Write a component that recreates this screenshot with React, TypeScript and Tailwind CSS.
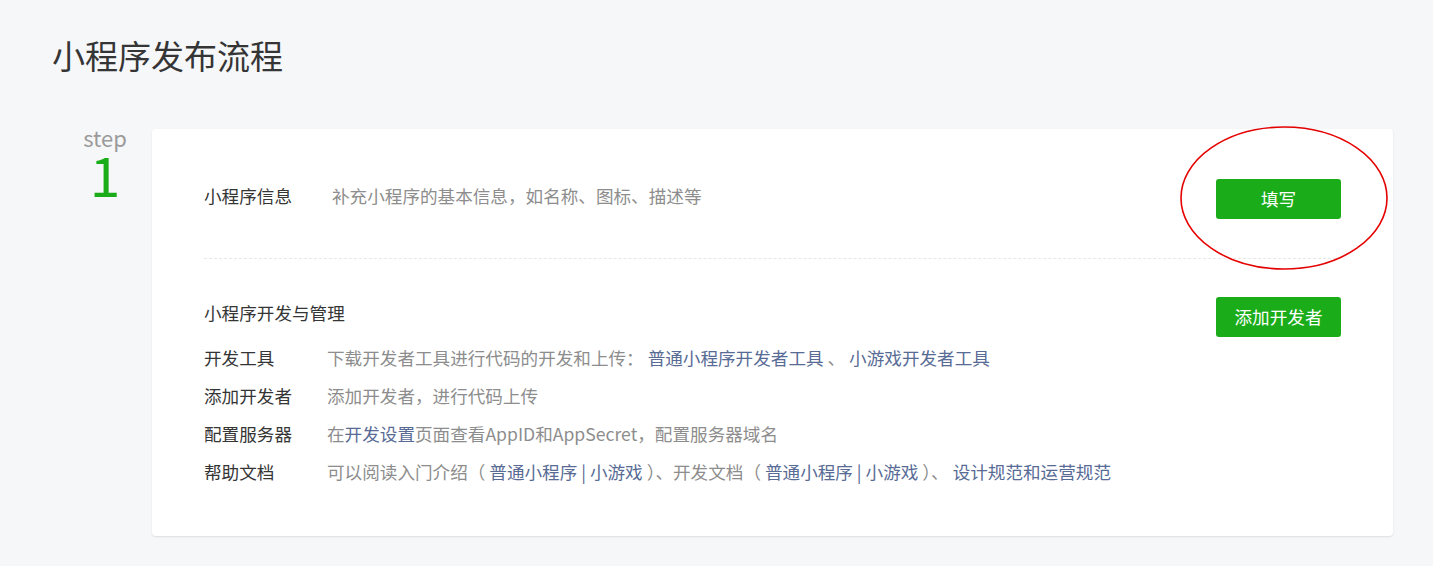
import React from "react";

const font = "font-['Noto_Sans_CJK_SC','Microsoft_YaHei',sans-serif]";

function Link({ children }: { children: React.ReactNode }) {
  return <span className="text-[#576b95]">{children}</span>;
}

const rows: { label: string; desc: React.ReactNode }[] = [
  {
    label: "开发工具",
    desc: (
      <>
        下载开发者工具进行代码的开发和上传：<Link> 普通小程序开发者工具</Link> 、{" "}
        <Link>小游戏开发者工具</Link>
      </>
    ),
  },
  { label: "添加开发者", desc: "添加开发者，进行代码上传" },
  {
    label: "配置服务器",
    desc: (
      <>
        在<Link>开发设置</Link>页面查看AppID和AppSecret，配置服务器域名
      </>
    ),
  },
  {
    label: "帮助文档",
    desc: (
      <>
        可以阅读入门介绍（ <Link>普通小程序 | 小游戏</Link> ）、开发文档（ <Link>普通小程序 | 小游戏</Link> ）、{" "}
        <Link>设计规范和运营规范</Link>
      </>
    ),
  },
];

function GreenButton({ children }: { children: React.ReactNode }) {
  return (
    <button className="w-[125px] h-[40px] rounded-[3px] bg-[#1aad19] text-white text-[17.6px] leading-none">
      {children}
    </button>
  );
}

export default function App() {
  return (
    <div className={`min-h-screen bg-[#f6f7f9] pl-[52px] pr-[40px] pt-[33px] pb-[31px] ${font}`}>
      <h1 className="text-[33px] leading-[44px] text-[#353535] font-normal">小程序发布流程</h1>

      <div className="flex mt-[52px]">
        <div className="w-[100px] shrink-0 flex flex-col items-center pl-[6px]">
          <span className="-mt-[3px] text-[22px] leading-[22px] text-[#9a9a9a]">step</span>
          <span className="text-[55px] leading-[50px] font-normal text-[#1aad19]">1</span>
        </div>

        <div className="flex-1 bg-white rounded-[4px] shadow-[0_1px_2px_rgba(0,0,0,0.1)] px-[52px] pb-[45px]">
          <div className="flex items-start justify-between pt-[50px] pb-[39px] border-b border-dashed border-[#e7e7eb]">
            <div className="flex text-[17.6px] leading-[34px]">
              <span className="w-[128px] text-[#353535]">小程序信息</span>
              <span className="text-[#8d8d8d]">补充小程序的基本信息，如名称、图标、描述等</span>
            </div>
            <div className="relative">
              <GreenButton>填写</GreenButton>
              <svg
                className="absolute left-[-36px] top-[-53px] pointer-events-none"
                width="208"
                height="144"
                viewBox="0 0 208 144"
              >
                <ellipse cx="104" cy="72" rx="103" ry="71" fill="none" stroke="#e50000" strokeWidth="1.6" />
              </svg>
            </div>
          </div>

          <div className="flex items-start justify-between pt-[38px]">
            <span className="text-[17.6px] leading-[31px] text-[#353535]">小程序开发与管理</span>
            <GreenButton>添加开发者</GreenButton>
          </div>

          <div className="mt-[2px] flex flex-col">
            {rows.map((r) => (
              <div key={r.label} className="flex text-[17.6px] leading-[38px]">
                <span className="w-[123px] shrink-0 text-[#353535]">{r.label}</span>
                <span className="text-[#8d8d8d] whitespace-pre">{r.desc}</span>
              </div>
            ))}
          </div>
        </div>
      </div>
    </div>
  );
}
